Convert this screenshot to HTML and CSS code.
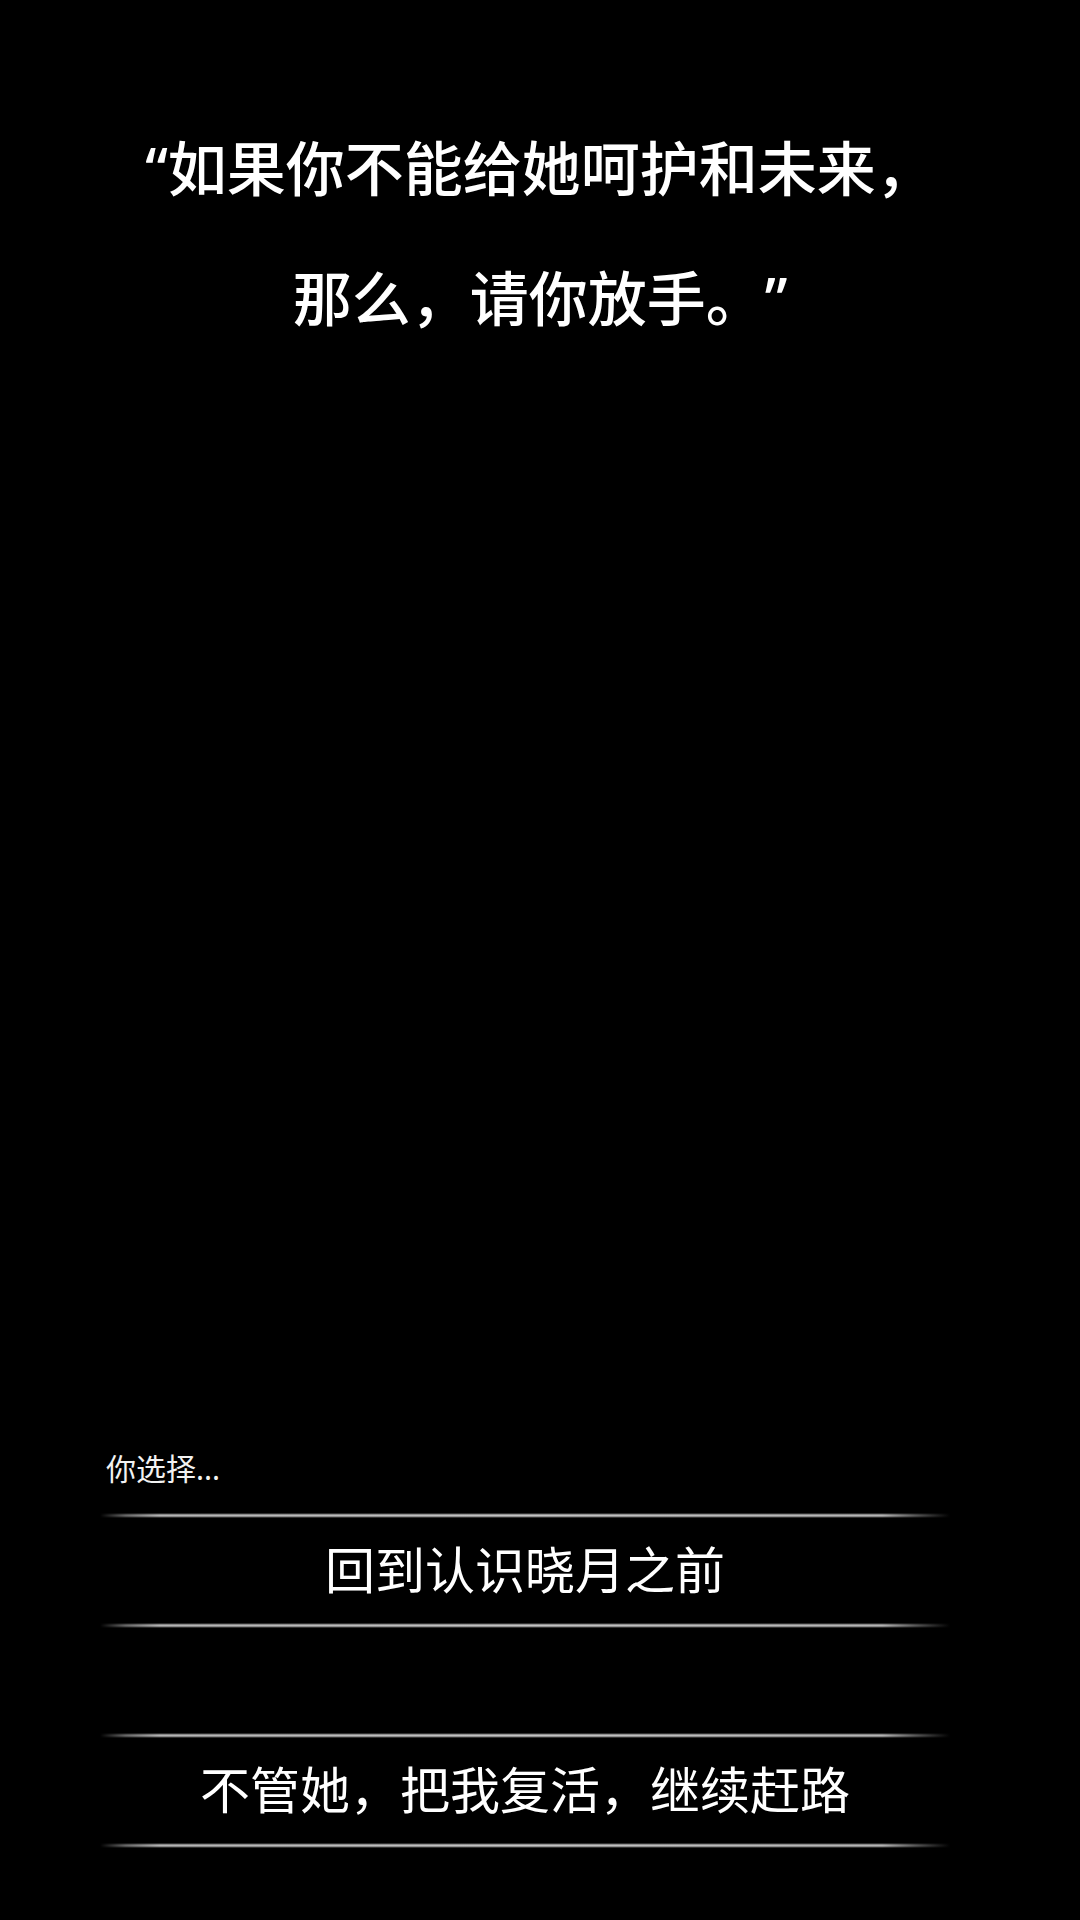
FILE: index.html
```html
<!DOCTYPE html>
<html lang="zh-CN">
<head>
<meta charset="utf-8">
<title>你选择</title>
<link rel="stylesheet" href="styles.css">
</head>
<body>
<main class="scene">
  <p class="quote">“如果你不能给她呵护和未来，<br>那么，请你放手。”</p>
  <section class="choices">
    <p class="prompt">你选择...</p>
    <button class="choice" type="button">回到认识晓月之前</button>
    <button class="choice" type="button">不管她，把我复活，继续赶路</button>
  </section>
</main>
</body>
</html>
```

FILE: styles.css
```css
html, body {
  margin: 0;
  padding: 0;
  background: #000;
}

body {
  width: 1080px;
  height: 1920px;
  overflow: hidden;
  color: #fff;
  font-family: "Noto Sans", "Noto Sans CJK SC", sans-serif;
  text-spacing-trim: space-all;
}

.scene {
  height: 1920px;
  display: flex;
  flex-direction: column;
  box-sizing: border-box;
  padding: 103px 0 72px;
}

/* Latin curly quotes (narrow), CJK punctuation keeps full cells */
.quote {
  margin: 0;
  text-align: center;
  font-size: 59px;
  font-weight: 500;
  line-height: 130px;
}

.choices {
  margin: auto 0 0 100px;
  width: 850px;
  display: flex;
  flex-direction: column;
  gap: 105px;
}

.prompt {
  margin: 0 0 -81px 6px;
  font-size: 30px;
  line-height: 40px;
  color: #f2f2f2;
}

.choice {
  position: relative;
  display: block;
  width: 100%;
  height: 115px;
  padding: 0;
  border: 0;
  background: transparent;
  color: #fff;
  font: inherit;
  font-size: 50px;
  line-height: 115px;
  text-align: center;
  cursor: pointer;
}

/* glowing rails above and below each option */
.choice::before,
.choice::after {
  content: "";
  position: absolute;
  left: 0;
  right: 0;
  height: 5px;
  background: linear-gradient(to right,
    rgba(200, 200, 200, 0) 0%,
    rgba(170, 170, 170, 0.6) 3%,
    #b4b4b4 7%,
    #c4c4c4 50%,
    #b4b4b4 92%,
    rgba(170, 170, 170, 0.5) 96%,
    rgba(200, 200, 200, 0) 100%);
  -webkit-mask-image: linear-gradient(to bottom, transparent 0%, #000 40%, #000 60%, transparent 100%);
  mask-image: linear-gradient(to bottom, transparent 0%, #000 40%, #000 60%, transparent 100%);
}

.choice::before { top: 0; }
.choice::after { bottom: 0; }
```
